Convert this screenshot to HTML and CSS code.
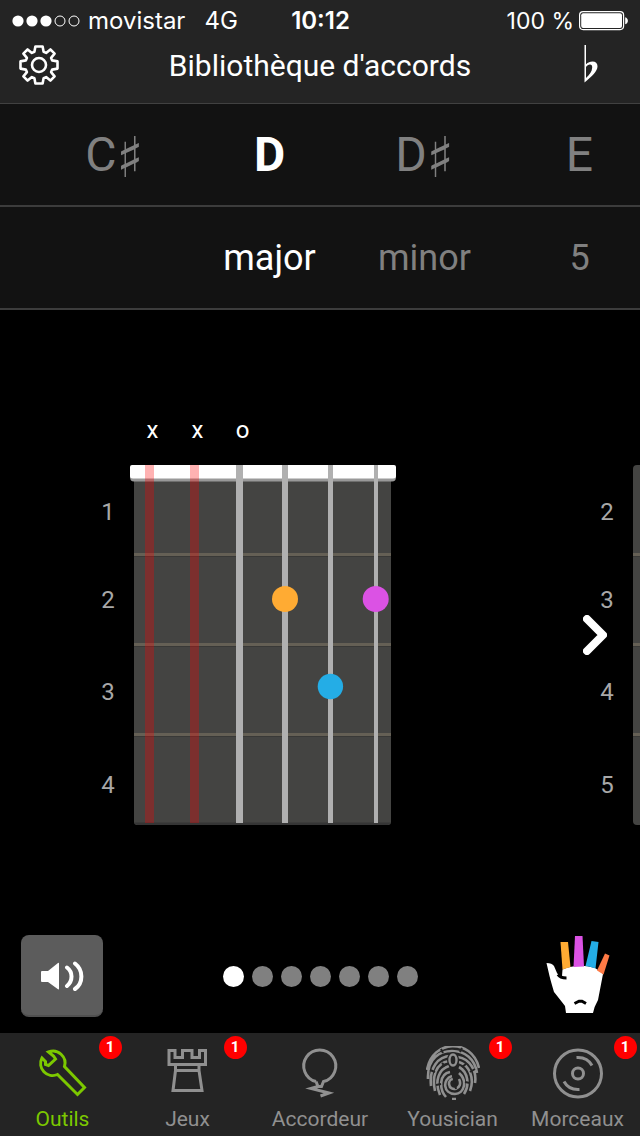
FILE: index.html
```html
<!DOCTYPE html>
<html lang="fr">
<head>
<meta charset="utf-8">
<meta name="viewport" content="width=device-width, initial-scale=1">
<title>Bibliothèque d'accords</title>
<link rel="stylesheet" href="styles.css">
</head>
<body>
<div class="app">
  <header class="header">
    <div class="status">
      <div class="status-left">
        <svg class="signal" viewBox="0 0 68 12" aria-hidden="true">
          <circle cx="6" cy="6" r="5.6"/><circle cx="20" cy="6" r="5.6"/><circle cx="34" cy="6" r="5.6"/>
          <circle class="off" cx="48" cy="6" r="5"/><circle class="off" cx="62" cy="6" r="5"/>
        </svg>
        <span class="carrier">movistar</span>
        <span>4G</span>
      </div>
      <span class="clock">10:12</span>
      <div class="status-right">
        <span>100 %</span>
        <svg class="battery" viewBox="0 0 50 20" aria-hidden="true">
          <rect class="case" x="0.6" y="0.6" width="44" height="18" rx="3.5"/>
          <rect x="2.2" y="2.2" width="40.8" height="14.8" rx="2"/>
          <path d="M46.2 6.2c3.6 1 3.6 6 0 7z"/>
        </svg>
      </div>
    </div>
    <div class="title-row">
      <button class="icon-button start" aria-label="Réglages">
        <svg class="gear" viewBox="-20 -20 40 40" aria-hidden="true">
          <path d="M-3.6-18.5H3.6L4.6-13.2L7.1-12.1L11.4-15.6L15.6-11.4L12.1-7.1L13.2-4.6L18.5-3.6V3.6L13.2 4.6L12.1 7.1L15.6 11.4L11.4 15.6L7.1 12.1L4.6 13.2L3.6 18.5H-3.6L-4.6 13.2L-7.1 12.1L-11.4 15.6L-15.6 11.4L-12.1 7.1L-13.2 4.6L-18.5 3.6V-3.6L-13.2-4.6L-12.1-7.1L-15.6-11.4L-11.4-15.6L-7.1-12.1L-4.6-13.2Z"/>
          <circle r="7"/>
        </svg>
      </button>
      <h1 class="title">Bibliothèque d'accords</h1>
      <button class="icon-button" aria-label="Bémol">
        <svg class="flat" viewBox="0 0 14 40" aria-hidden="true">
          <path fill-rule="evenodd" d="M0.500 0H2V19.300C4 17.300 6 16.400 8.500 16.400C11.600 16.400 13.500 18.300 13.500 21.200C13.500 26.500 8 31 0.500 37.500ZM2 22V33C5.600 29.500 8 26.500 8.200 22.400C8.300 20.300 7.500 19.400 6 19.400C4.400 19.400 3 20.200 2 22Z"/>
        </svg>
      </button>
    </div>
  </header>

  <nav class="picker roots" aria-label="Fondamentale">
    <div class="picker-track">
      <button>C<span class="sharp">♯</span></button>
      <button class="selected">D</button>
      <button>D<span class="sharp">♯</span></button>
      <button>E</button>
    </div>
  </nav>
  <nav class="picker qualities" aria-label="Type d'accord">
    <div class="picker-track">
      <span></span>
      <button class="selected">major</button>
      <button>minor</button>
      <button>5</button>
    </div>
  </nav>

  <main class="stage">
    <div class="carousel">
      <section class="chord" aria-label="D major">
        <div class="marks"><span>x</span><span>x</span><span>o</span></div>
        <div class="frets"><span>1</span><span>2</span><span>3</span><span>4</span></div>
        <svg class="board" viewBox="0 0 266 360" aria-hidden="true">
          <path class="wood" d="M4 0H261V357Q261 360 258 360H7Q4 360 4 357Z"/>
          <path class="edge" d="M4 357.500H261L258 360H7Z"/>
          <path class="fret-shade" d="M4 91.500H261M4 181.500H261M4 271.500H261"/>
          <path class="fret" d="M4 89.500H261M4 179.500H261M4 269.500H261"/>
          <path class="nut-shade" d="M0 10H266V12Q266 16.500 262 16.500H4Q0 16.500 0 12Z"/>
          <path class="nut" d="M2 0H264Q266 0 266 2V11Q266 13.500 263 13.500H3Q0 13.500 0 11V2Q0 0 2 0Z"/>
          <path class="muted" d="M15 0H24V358H15ZM60 0H69V358H60Z"/>
          <path class="string" d="M106 0H113V358H106ZM152 0H158V358H152ZM198 0H203V358H198ZM244 0H248V358H244Z"/>
          <circle class="f1" cx="155" cy="134" r="13"/>
          <circle class="f2" cx="245.700" cy="134" r="13"/>
          <circle class="f3" cx="200.400" cy="221.500" r="12.700"/>
        </svg>
      </section>
      <section class="chord" aria-label="D major, position 2">
        <div class="frets"><span>2</span><span>3</span><span>4</span><span>5</span></div>
        <svg class="board" viewBox="0 0 266 360" aria-hidden="true">
          <rect class="wood" x="4" width="257" height="360" rx="4"/>
          <path class="fret-shade" d="M4 91.500H261M4 181.500H261M4 271.500H261"/>
          <path class="fret" d="M4 89.500H261M4 179.500H261M4 269.500H261"/>
        </svg>
      </section>
      <button class="next" aria-label="Suivant">
        <svg viewBox="0 0 24 40" aria-hidden="true"><path d="M4 4L20 20L4 36"/></svg>
      </button>
    </div>

    <div class="controls">
      <button class="play" aria-label="Écouter">
        <svg viewBox="0 0 44 32" aria-hidden="true">
          <path d="M2 12H8L18 4Q19 3.300 19 4.500V29.500Q19 30.800 18 30.200L8 23H2Q1 23 1 22V13Q1 12 2 12Z"/>
          <path class="wave" d="M27 8.500C33 13 33 22 27 27M35 4.500C43.500 11 43.500 24 35 30"/>
        </svg>
      </button>
      <div class="pages"><i class="current"></i><i></i><i></i><i></i><i></i><i></i><i></i></div>
      <button class="hand" aria-label="Doigts">
        <svg viewBox="0 1 64 80" aria-hidden="true">
          <path class="palm" d="M0.500 28Q6 28 8 31L11 38Q13 42 16 41L16.500 34.500Q32 28 49 33Q54 36 57 39L52 65Q48 72 47 78H20L19 71Q16 67 8 57Q5 47 3.500 41Z"/>
          <path class="f1" d="M14.500 7H22L24.500 32L16.500 34.500Z"/>
          <path class="f2" d="M29 1H36.500L38 31.500L27.500 32Z"/>
          <path class="f3" d="M45.500 6L52.500 7L49.500 33.500Q45 31.500 39.500 31Z"/>
          <path class="f4" d="M59 18.500L63.500 20.500L57.500 39.500L51 35.500Z"/>
          <path class="crease" d="M12 39.500Q14 43 20.500 43M28.500 68.500L33 66.200H36L40 68.500"/>
        </svg>
      </button>
    </div>
  </main>

  <nav class="tabs" aria-label="Navigation">
    <a class="tab active" href="#outils">
      <svg viewBox="0 0 54 54" aria-hidden="true">
        <path d="M12.500 6A12 12 0 0 1 28.500 20.500L48.500 41.500L41.500 48.500L21.500 28.500A12 12 0 0 1 6 12L9.500 15.500V18.500L12.500 19.500L19.500 13L17.500 10Z"/>
      </svg>
      <span>Outils</span><b class="badge">1</b>
    </a>
    <a class="tab" href="#jeux">
      <svg viewBox="0 0 54 54" aria-hidden="true">
        <path d="M8 4.500H14V11.500H21.500V4.500H31V11.500H38.500V4.500H44.500V18.500H8ZM14.500 18.500V24.500H38V18.500M14.500 24.500L12 44.500H41L38 24.500"/>
      </svg>
      <span>Jeux</span><b class="badge">1</b>
    </a>
    <a class="tab" href="#accordeur">
      <svg viewBox="0 0 54 54" aria-hidden="true">
        <path d="M23 35.500A16 16 0 1 1 30.500 35.500L28.500 40.500H25L23 35.500M25 40.500L18 42.500L36 47L27.500 50"/>
      </svg>
      <span>Accordeur</span>
    </a>
    <a class="tab" href="#yousician">
      <svg class="print" viewBox="0 0 54 54" aria-hidden="true">
        <path d="M1 24C6-7 46-8 53 22M2 33C1 11 15 5 26 5C39 5 49 13 51 27M5 40C3 22 12 10 25 10M32 11C44 13 51 25 49 37M9 45C6 32 9 17 23 15M33 16C43 19 49 32 44 45M14 49C8 35 13 23 23 20M33 21C42 26 44 39 38 48M20 51C13 43 13 28 24 26M33 27C42 35 38 48 29 48C17 48 16 33 26 30M33 33C38 43 24 47 23 38C23 35 25 33 27 33M26 53L30 53"/>
        <path class="gap" d="M15 3L17 7M36 2L34 6M4 24L9 26M49 23L44 26M16 17L19 20M40 18L36 21M10 39L15 38M44 37L39 36"/>
        <ellipse class="clef-shade" cx="27" cy="14" rx="6" ry="8"/>
        <path class="gap" d="M25 20L30 43"/>
        <ellipse class="clef" cx="27" cy="14" rx="3.500" ry="5.500"/>
      </svg>
      <span>Yousician</span><b class="badge">1</b>
    </a>
    <a class="tab" href="#morceaux">
      <svg viewBox="0 0 54 54" aria-hidden="true">
        <circle cx="27" cy="27.500" r="23.500"/><circle cx="27" cy="27.500" r="5.500"/>
        <path d="M25.500 11.500C33 11 38 14 41 19.500M13 35.500C16 41 21 44 28.500 43.500"/>
      </svg>
      <span>Morceaux</span><b class="badge">1</b>
    </a>
  </nav>
</div>
</body>
</html>
```

FILE: styles.css
```css
* { box-sizing: border-box; }

body {
  margin: 0;
  background: #000;
  color: #fff;
  font-family: Roboto, "Liberation Sans", sans-serif;
}

button {
  margin: 0;
  padding: 0;
  border: 0;
  background: none;
  color: inherit;
  font: inherit;
  cursor: pointer;
}

svg { display: block; fill: currentColor; }

.app {
  display: flex;
  flex-direction: column;
  min-height: 100vh;
  overflow: hidden;
}

/* Header */
.header {
  padding-bottom: 14px;
  background: #242424;
  border-bottom: 1px solid #414141;
}

.status {
  display: grid;
  grid-template-columns: 1fr auto 1fr;
  align-items: center;
  height: 41px;
  padding: 0 11px 0 12px;
  font-family: Inter, Roboto, sans-serif;
  font-size: 24px;
  white-space: nowrap;
}

.status-left, .status-right { display: flex; align-items: center; }
.status-right { justify-content: flex-end; gap: 5px; font-size: 23px; }
.signal { width: 68px; height: 12px; margin-right: 8px; }
.signal .off { fill: none; stroke: #fff; }
.carrier { margin-right: 19px; }
.clock { font-weight: 600; }
.battery { width: 50px; height: 20px; }
.battery .case { fill: none; stroke: #fff; stroke-width: 1.2; }

.title-row {
  display: grid;
  grid-template-columns: 60px 1fr 60px;
  align-items: center;
  height: 48px;
  padding: 0 19px;
}

.title {
  margin: 0;
  font-size: 30px;
  font-weight: 400;
  text-align: center;
}

.icon-button { display: flex; justify-content: center; }
.icon-button.start { justify-content: flex-start; }
.gear { width: 40px; height: 40px; fill: none; stroke: #fff; stroke-width: 2.6; stroke-linejoin: round; }
.flat { width: 14px; height: 40px; }

/* Root and quality pickers */
.picker {
  overflow: hidden;
  background: #121212;
  border-bottom: 2px solid #3c3c3c;
}

.picker-track {
  display: grid;
  grid-template-columns: repeat(4, 1fr);
  height: 101px;
  margin: 0 -17px 0 37px;
  color: #808080;
}

.picker .selected { color: #fff; }
.roots { font-size: 48px; }
.roots .selected { font-weight: 700; }
.qualities { font-size: 36px; }
.sharp {
  font-family: "DejaVu Sans", sans-serif;
  font-size: 56px;
  line-height: 24px;
  vertical-align: -6px;
}

/* Chord diagrams */
.stage {
  display: flex;
  flex: 1;
  flex-direction: column;
  justify-content: space-between;
  gap: 24px;
}

.carousel {
  position: relative;
  display: flex;
  padding-top: 106px;
  overflow: hidden;
}

.chord {
  display: grid;
  flex: none;
  grid-template-columns: 24px 266px;
  grid-template-rows: 28px 360px;
  gap: 21px 10px;
  width: 499px;
  padding-left: 96px;
}

.marks {
  display: grid;
  grid-column: 2;
  grid-template-columns: repeat(6, 45px);
  font-size: 24px;
  line-height: 28px;
  text-align: center;
}

.frets {
  display: grid;
  grid-row: 2;
  grid-template-rows: 94px 81px 103px 83px;
  align-items: center;
  color: #a8a8a8;
  font-size: 24px;
  text-align: center;
}

.board { grid-row: 2; width: 266px; height: 360px; }
.wood { fill: #444442; }
.edge { fill: #353535; }
.fret, .fret-shade { fill: none; stroke: #656055; stroke-width: 3; }
.fret-shade { stroke: #393937; stroke-width: 1; }
.nut { fill: #fff; }
.nut-shade { fill: #999; }
.muted { fill: #f00; fill-opacity: 0.3; }
.string { fill: #b0b0b0; }
.f1 { fill: #ffab33; }
.f2 { fill: #db52e4; }
.f3 { fill: #24ade6; }
.f4 { fill: #ff7a45; }

.next { position: absolute; right: 33px; bottom: 170px; }
.next svg {
  width: 24px;
  height: 40px;
  fill: none;
  stroke: #fff;
  stroke-width: 8;
  stroke-linecap: round;
  stroke-linejoin: round;
}

/* Playback controls */
.controls {
  display: grid;
  grid-template-columns: 1fr auto 1fr;
  align-items: center;
  padding: 0 21px 16px;
}

.play {
  display: grid;
  place-items: center;
  width: 82px;
  height: 82px;
  background: #5c5c5c;
  border-bottom: 2px solid #505050;
  border-radius: 8px;
}
.play svg { width: 44px; height: 32px; }
.wave { fill: none; stroke: #fff; stroke-width: 4; stroke-linecap: round; }

.pages { display: flex; gap: 8px; }
.pages i { width: 21px; height: 21px; background: #808080; border-radius: 50%; }
.pages .current { background: #fff; }

.hand { justify-self: end; margin-right: 9px; }
.hand svg { width: 64px; height: 80px; }
.palm { fill: #fff; }
.crease { fill: none; stroke: #000; stroke-width: 3; }

/* Tab bar */
.tabs {
  display: grid;
  grid-template-columns: 125fr 125fr 140fr 125fr 125fr;
  background: #242424;
}

.tab {
  position: relative;
  display: flex;
  flex-direction: column;
  align-items: center;
  height: 103px;
  padding-top: 13px;
  color: #909090;
  font-size: 21px;
  line-height: 26px;
  text-decoration: none;
}
.tab.active { color: #7cc800; }
.tab svg {
  width: 54px;
  height: 54px;
  margin-bottom: 6px;
  fill: none;
  stroke: currentColor;
  stroke-width: 3;
}
.tab .print { stroke-width: 2.6; }
.print .gap { stroke: #242424; stroke-width: 2; }
.print .clef-shade { fill: #242424; stroke: none; }
.print .clef { stroke-width: 2.4; }

.badge {
  position: absolute;
  top: 3px;
  left: calc(50% + 36px);
  width: 23px;
  height: 23px;
  background: #f00;
  border-radius: 50%;
  color: #fff;
  font-size: 15px;
  line-height: 23px;
  text-align: center;
}
```
